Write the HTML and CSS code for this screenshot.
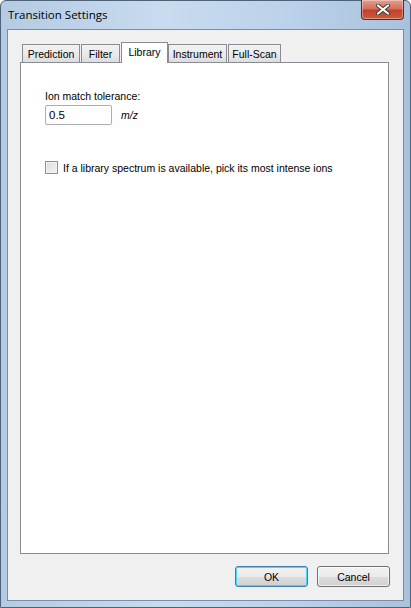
FILE: index.html
```html
<!DOCTYPE html>
<html>
<head>
<meta charset="utf-8">
<link rel="stylesheet" href="styles.css">
</head>
<body>
<div class="window">
  <div class="titlebar">
    <span class="title">Transition Settings</span>
    <div class="close">
      <svg width="14" height="11" viewBox="0 0 14 11"><path d="M2 1.5 L12 9.5 M12 1.5 L2 9.5" stroke="#3b3b3b" stroke-width="4" stroke-linecap="round"/><path d="M2 1.5 L12 9.5 M12 1.5 L2 9.5" stroke="#ffffff" stroke-width="2.2" stroke-linecap="round"/></svg>
    </div>
  </div>
  <div class="frame-row">
    <div class="client">
      <div class="tabs">
        <div class="tabstrip">
          <div class="tab t-pred">Prediction</div>
          <div class="tab t-filter">Filter</div>
          <div class="tab active t-lib">Library</div>
          <div class="tab t-inst">Instrument</div>
          <div class="tab t-full">Full-Scan</div>
        </div>
        <div class="panel">
          <div class="label">Ion match tolerance:</div>
          <div class="field-row">
            <div class="input">0.5</div>
            <span class="unit">m/z</span>
          </div>
          <div class="check-row">
            <span class="checkbox"></span>
            <span class="check-label">If a library spectrum is available, pick its most intense ions</span>
          </div>
        </div>
      </div>
      <div class="buttons">
        <div class="btn default">OK</div>
        <div class="btn">Cancel</div>
      </div>
    </div>
  </div>
</div>
</body>
</html>
```
FILE: styles.css
```css
* { box-sizing: border-box; }
html, body { margin: 0; padding: 0; background: #ffffff; }
body { font-family: "Liberation Sans", Arial, sans-serif; font-size: 10.5px; color: #000; }

.window {
  width: 411px;
  height: 608px;
  background: linear-gradient(90deg, #b4cbe3 0%, #c8dbef 40%, #bcd2ea 70%, #a9c1dc 100%);
  border: 1px solid #4f6278;
  border-radius: 6px 6px 0 0;
  display: flex;
  flex-direction: column;
  position: relative;
}

.titlebar {
  height: 28px;
  display: flex;
  align-items: flex-start;
  padding-left: 7px;
  position: relative;
}
.title {
  font-family: "Open Sans", "Liberation Sans", sans-serif;
  font-size: 11.5px;
  margin-top: 6px;
  color: #000;
}
.close {
  position: absolute;
  right: 6px;
  top: -1px;
  width: 43px;
  height: 20px;
  border: 1px solid #5b2a24;
  border-top: none;
  border-radius: 0 0 4px 4px;
  background: linear-gradient(180deg, #e6a08f 0%, #d2705c 45%, #c2402a 55%, #cf5a3e 100%);
  box-shadow: inset 0 0 0 1px rgba(255,255,255,0.35);
  display: flex;
  align-items: center;
  justify-content: center;
}

.frame-row {
  flex: 1;
  display: flex;
  padding: 0 6px 6px 6px;
}

.client {
  flex: 1;
  background: #f0f0f0;
  border: 1px solid #7b8da3;
  display: flex;
  flex-direction: column;
  padding: 12px 13px 12px 12px;
}

.tabs {
  display: flex;
  flex-direction: column;
  width: 369px;
}
.tabstrip {
  height: 20px;
  display: flex;
  align-items: flex-end;
  padding-left: 2px;
  position: relative;
  z-index: 1;
}
.tab {
  height: 18px;
  border: 1px solid #898c95;
  border-bottom: none;
  background: linear-gradient(180deg, #f2f2f2 0%, #ebebeb 50%, #dddddd 100%);
  padding-top: 3px;
  text-align: center;
  color: #000;
  white-space: nowrap;
}
.t-pred { width: 58px; margin-right: 1px; }
.t-filter { width: 39px; margin-right: 1px; }
.t-lib { width: 47px; }
.t-inst { width: 59px; margin-right: 1px; }
.t-full { width: 53px; }
.tab.active {
  height: 21px;
  background: #ffffff;
  margin-bottom: -1px;
  padding-top: 3px;
}
.panel {
  height: 492px;
  background: #ffffff;
  border: 1px solid #898c95;
  padding: 27px 0 0 24px;
}
.label {
  line-height: 13px;
  margin-bottom: 2px;
}
.field-row {
  display: flex;
  align-items: center;
}
.input {
  width: 67px;
  height: 20px;
  border: 1px solid #abadb3;
  border-radius: 2px;
  background: #fff;
  padding: 3px 0 0 3px;
  font-size: 11.5px;
}
.unit {
  font-style: italic;
  margin-left: 9px;
}
.check-row {
  display: flex;
  align-items: center;
  margin-top: 36px;
}
.checkbox {
  width: 13px;
  height: 13px;
  border: 1px solid #8f8f8f;
  background: linear-gradient(135deg, #dcdcdc 0%, #f4f4f4 100%);
  box-shadow: inset 0 0 0 1px #f4f4f4;
}
.check-label {
  margin-left: 5px;
}

.buttons {
  display: flex;
  justify-content: flex-end;
  gap: 9px;
  margin-top: 12px;
}
.btn {
  width: 73px;
  height: 21px;
  border: 1px solid #707070;
  border-radius: 3px;
  background: linear-gradient(180deg, #f2f2f2 0%, #ebebeb 50%, #dddddd 51%, #cfcfcf 100%);
  display: flex;
  align-items: center;
  justify-content: center;
  box-shadow: inset 0 0 0 1px rgba(255,255,255,0.7);
}
.btn.default {
  border-color: #3c7fb1;
  box-shadow: inset 0 0 0 1px #48d8fb;
}
```
